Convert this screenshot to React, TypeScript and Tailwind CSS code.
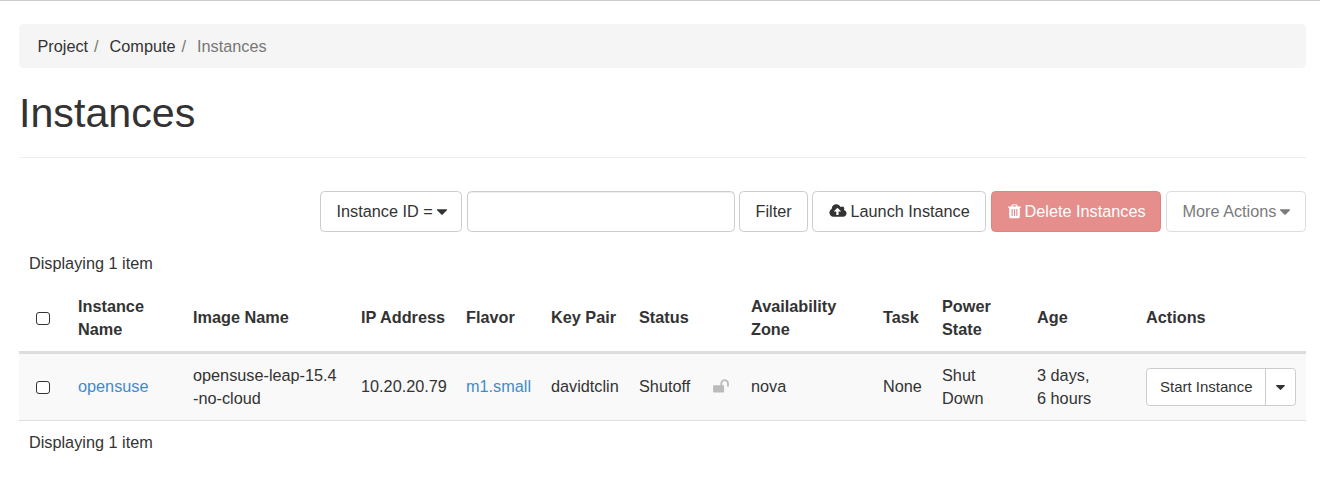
import type { ReactNode } from 'react';

function Glyph({ viewBox, d, className }: { viewBox: string; d: string; className: string }) {
  return (
    <svg viewBox={viewBox} className={`shrink-0 fill-current ${className}`} aria-hidden="true">
      <path d={d} />
    </svg>
  );
}

function CaretDown({ className }: { className: string }) {
  return (
    <Glyph
      viewBox="0 640 1024 576"
      className={className}
      d="M1024 704q0 26-19 45l-448 448q-19 19-45 19t-45-19l-448-448q-19-19-19-45t19-45 45-19h896q26 0 45 19t19 45z"
    />
  );
}

function CloudUpload() {
  return (
    <Glyph
      viewBox="0 0 1920 1792"
      className="mb-[2px] h-4 w-[18px]"
      d="M1280 928q0-14-9-23l-352-352q-9-9-23-9t-23 9l-351 351q-10 12-10 24 0 14 9 23t23 9h224v352q0 13 9.5 22.5t22.5 9.5h192q13 0 22.5-9.5t9.5-22.5v-352h224q13 0 22.5-9.5t9.5-22.5zm640 224q0 159-112.5 271.5t-271.5 112.5h-1088q-185 0-316.5-131.5t-131.5-316.5q0-130 70-240t188-165q-2-30-2-43 0-212 150-362t362-150q156 0 285.5 87t188.5 231q71-62 166-62 106 0 181 75t75 181q0 76-41 138 130 31 213.5 135.5t83.5 238.5z"
    />
  );
}

function Trash() {
  return (
    <Glyph
      viewBox="0 -128 1408 1792"
      className="mb-px h-[16.500px] w-[13px]"
      d="M512 1248v-704q0-14-9-23t-23-9h-64q-14 0-23 9t-9 23v704q0 14 9 23t23 9h64q14 0 23-9t9-23zm256 0v-704q0-14-9-23t-23-9h-64q-14 0-23 9t-9 23v704q0 14 9 23t23 9h64q14 0 23-9t9-23zm256 0v-704q0-14-9-23t-23-9h-64q-14 0-23 9t-9 23v704q0 14 9 23t23 9h64q14 0 23-9t9-23zm-544-992h448l-48-117q-7-9-17-11h-317q-10 2-17 11zm928 32v64q0 14-9 23t-23 9h-96v948q0 83-47 143.500t-113 60.500h-832q-66 0-113-58.500t-47-141.500v-952h-96q-14 0-23-9t-9-23v-64q0-14 9-23t23-9h309l70-167q15-37 54-63t79-26h320q40 0 79 26t54 63l70 167h309q14 0 23 9t9 23z"
    />
  );
}

function Unlock() {
  return (
    <Glyph
      viewBox="0 0 1664 1792"
      className="h-[17px] w-4"
      d="M1664 576v256q0 26-19 45t-45 19h-64q-26 0-45-19t-19-45v-256q0-106-75-181t-181-75-181 75-75 181v192h96q40 0 68 28t28 68v576q0 40-28 68t-68 28h-960q-40 0-68-28t-28-68v-576q0-40 28-68t68-28h672v-192q0-185 131.5-316.500t316.500-131.500 316.500 131.500 131.500 316.500z"
    />
  );
}

function Button({ className, children, disabled }: { className: string; children: ReactNode; disabled?: boolean }) {
  return (
    <button
      type="button"
      disabled={disabled}
      className={`flex h-[41px] shrink-0 items-center gap-1 whitespace-nowrap rounded-[4.500px] border pl-[15.500px] ${className}`}
    >
      {children}
    </button>
  );
}

function Checkbox({ label }: { label: string }) {
  return (
    <button
      type="button"
      role="checkbox"
      aria-checked="false"
      aria-label={label}
      className="mt-[1px] ml-[7px] block h-[13px] w-[14px] rounded-[3px] border border-[#333] bg-white"
    />
  );
}

const HEADERS: ReactNode[] = [
  <Checkbox key="all" label="Select all" />,
  <>Instance<br />Name</>,
  'Image Name',
  'IP Address',
  'Flavor',
  'Key Pair',
  'Status',
  '',
  <>Availability<br />Zone</>,
  'Task',
  <>Power<br />State</>,
  'Age',
  'Actions',
];

const CELLS: ReactNode[] = [
  <Checkbox key="row" label="Select opensuse" />,
  <a key="name" href="#" className="text-[#428bca]">opensuse</a>,
  <>opensuse-leap-15.4<br />-no-cloud</>,
  '10.20.20.79',
  <a key="flavor" href="#" className="text-[#428bca]">m1.small</a>,
  'davidtclin',
  'Shutoff',
  <span key="lock" className="block text-[#bbb]"><Unlock /></span>,
  'nova',
  'None',
  <>Shut<br />Down</>,
  <>3 days,<br />6 hours</>,
  <div key="actions" className="mt-[1px] flex h-[38px] w-[150px] rounded-[3.500px] border border-[#ccc] bg-white">
    <button type="button" className="w-[119px] border-r border-[#ccc] pb-px pl-[13px] text-left text-[15px] whitespace-nowrap">
      Start Instance
    </button>
    <button type="button" aria-label="More" className="flex flex-1 items-center justify-center">
      <CaretDown className="h-[5px] w-[9px]" />
    </button>
  </div>,
];

export default function App() {
  return (
    <main className="h-[492px] overflow-hidden border-t border-[#ccc] bg-white pt-[23px] pr-[14px] pl-[19px] font-['Liberation_Sans',Arial,sans-serif] text-[16.250px] leading-[23px] text-[#333]">
      <nav className="flex h-11 items-center rounded-[4.500px] bg-[#f5f5f5] pl-[18.500px]">
        <a href="#">Project</a>
        <span className="w-[21.500px] pl-[6px] text-[#777]">/</span>
        <a href="#">Compute</a>
        <span className="w-[21.500px] pl-[6px] text-[#777]">/</span>
        <span className="text-[#777]">Instances</span>
      </nav>
      <h1 className="h-[90px] border-b border-[#eee] pt-[22px] text-[41.200px] leading-[46px]">Instances</h1>
      <div className="mt-[33px] flex justify-end">
        <Button className="mr-[5px] w-[142px] border-[#ccc]">
          Instance ID = <CaretDown className="h-[6px] w-[10px]" />
        </Button>
        <input
          aria-label="Filter value"
          className="mr-1 h-[41px] w-[268px] rounded-[4.500px] border border-[#ccc] bg-white px-3 shadow-[inset_0_1px_1px_rgba(0,0,0,0.075)]"
        />
        <Button className="mr-1 w-[69px] border-[#ccc]">Filter</Button>
        <Button className="mr-[5px] w-[174px] border-[#ccc]">
          <CloudUpload /> Launch Instance
        </Button>
        <Button disabled className="mr-[5px] w-[170px] border-[#d43f3a] bg-[#d9534f] text-white opacity-65">
          <Trash /> Delete Instances
        </Button>
        <Button disabled className="w-[140px] border-[#ccc] opacity-65">
          More Actions <CaretDown className="h-[6px] w-[10px]" />
        </Button>
      </div>
      <p className="mt-5 h-[34px] pl-[10px]">Displaying 1 item</p>
      <table className="w-[1287px] table-fixed border-collapse text-left">
        <colgroup>
          <col className="w-[49px]" />
          <col className="w-[115px]" />
          <col className="w-[168px]" />
          <col className="w-[105px]" />
          <col className="w-[85px]" />
          <col className="w-[88px]" />
          <col className="w-[74px]" />
          <col className="w-[38px]" />
          <col className="w-[132px]" />
          <col className="w-[59px]" />
          <col className="w-[95px]" />
          <col className="w-[109px]" />
          <col className="w-[170px]" />
        </colgroup>
        <thead>
          <tr className="h-[68px] shadow-[inset_0_-3px_0_#ddd]">
            {HEADERS.map((header, i) => (
              <th key={i} className="pt-0 pr-0 pb-[5px] pl-[10px] align-middle font-bold whitespace-nowrap">{header}</th>
            ))}
          </tr>
        </thead>
        <tbody>
          <tr className="h-[67px] bg-[#f9f9f9] shadow-[inset_0_-1px_0_#ddd]">
            {CELLS.map((cell, i) => (
              <td key={i} className="pt-0 pr-0 pb-[2px] pl-[10px] align-middle whitespace-nowrap">{cell}</td>
            ))}
          </tr>
        </tbody>
      </table>
      <p className="mt-[10px] pl-[10px]">Displaying 1 item</p>
    </main>
  );
}
